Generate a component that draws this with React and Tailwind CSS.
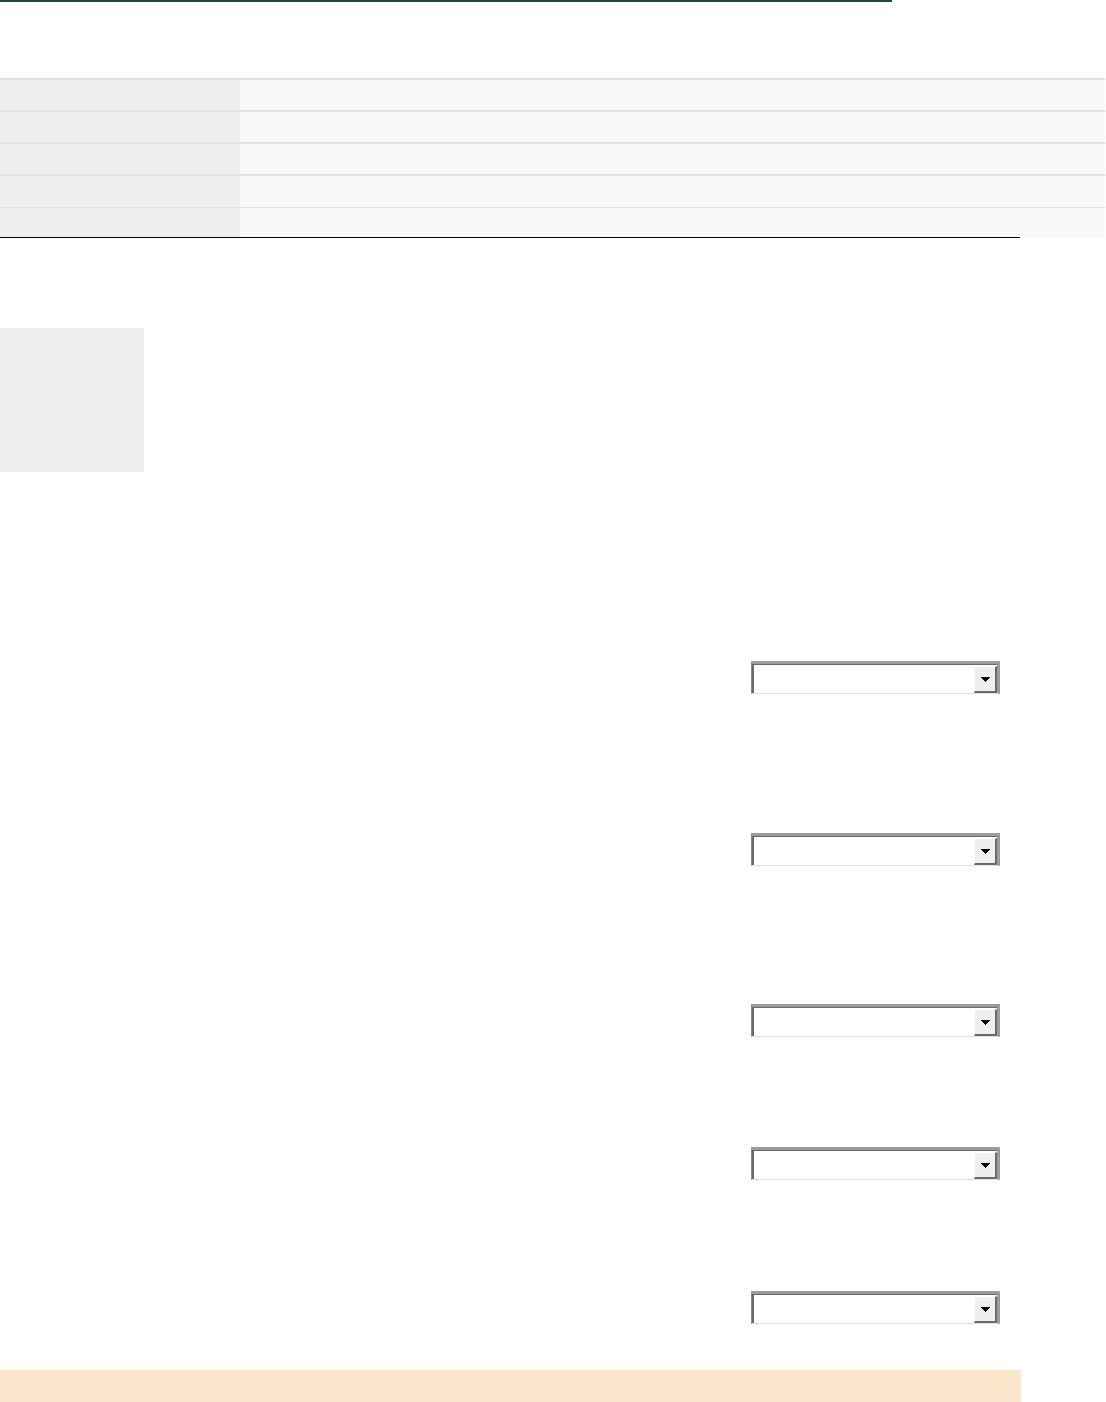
import React from 'react';

const rows = [
  { border: 'border-t-2 border-[#dee2e6]', h: 'h-[30px]' },
  { border: 'border-t-2 border-[#dee2e6]', h: 'h-[30px]' },
  { border: 'border-t-2 border-[#dee2e6]', h: 'h-[30px]' },
  { border: 'border-t-2 border-[#dee2e6]', h: 'h-[31px]' },
  { border: 'border-t border-[#e2e2e2]', h: 'h-[30px]' },
];

const FakeSelect = ({ className = '' }) => (
  <div className={`ml-[751px] w-[249px] h-[33px] flex bg-white border-solid border-t-[3px] border-t-[#9b9b9b] border-l border-l-[#8a8a8a] border-r-[3px] border-r-[#9b9b9b] border-b border-b-[#e0e0e0] ${className}`}>
    <div className="flex-1 flex border-t border-l-2 border-[#6a6a6a]">
      <div className="flex-1" />
      <div className="w-[23px] mt-px flex items-center justify-center bg-[#efefef] border-t border-l border-white border-r-2 border-b-2 border-r-[#6a6a6a] border-b-[#6a6a6a]">
        <svg width="9" height="5" viewBox="0 0 9 5" shapeRendering="crispEdges">
          <path d="M0 0h9v1h-1v1h-1v1h-1v1h-1v1h-1v-1h-1v-1h-1v-1h-1v-1h-1z" fill="#000" />
        </svg>
      </div>
    </div>
  </div>
);

export default function App() {
  return (
    <div className="w-[1106px] min-h-[1402px] bg-white font-['Liberation_Sans',Arial,sans-serif]">
      <div className="h-[2px] w-[892px] bg-[#1c4d3b]" />

      <div className="mt-[76px] w-[1105px]">
        {rows.map((r, i) => (
          <div key={i} className={`flex ${r.border}`}>
            <div className={`w-[240px] bg-[#efefef] ${r.h}`} />
            <div className={`flex-1 bg-[#f9f9f9] ${r.h}`} />
          </div>
        ))}
      </div>
      <div className="relative -mt-px h-px w-[1020px] bg-black" />

      <div className="mt-[90px] w-[144px] h-[144px] bg-[#eeeeee]" />

      <FakeSelect className="mt-[189px]" />
      <FakeSelect className="mt-[139px]" />
      <FakeSelect className="mt-[138px]" />
      <FakeSelect className="mt-[110px]" />
      <FakeSelect className="mt-[111px]" />

      <div className="mt-[46px] w-[1021px] h-[32px] bg-[#fde7cc]" />
    </div>
  );
}
